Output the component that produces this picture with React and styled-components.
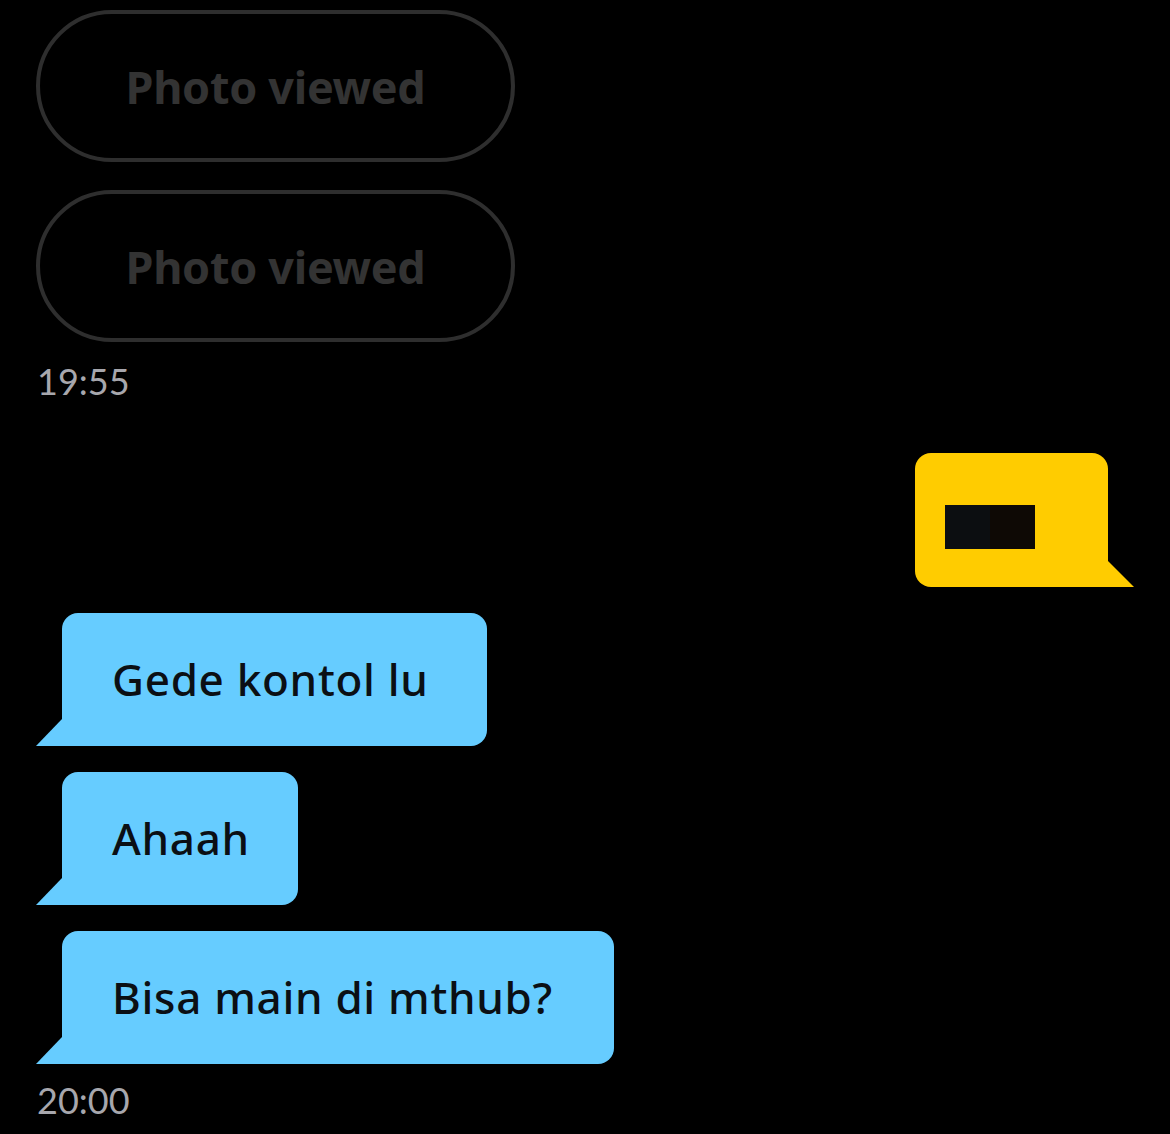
import React from "react";
import styled, { createGlobalStyle } from "styled-components";

const GlobalStyle = createGlobalStyle`
  html, body {
    margin: 0;
    padding: 0;
    background: #000;
  }
  body {
    font-family: "Noto Sans", "Liberation Sans", sans-serif;
  }
`;

const Chat = styled.div`
  width: 1170px;
  height: 1134px;
  box-sizing: border-box;
  padding: 10px 36px 0 36px;
  display: flex;
  flex-direction: column;
  overflow: hidden;
  background: #000;
`;

const Pill = styled.div`
  width: 479px;
  height: 152px;
  box-sizing: border-box;
  border: 4px solid #2e2e2e;
  border-radius: 76px;
  display: flex;
  align-items: center;
  justify-content: center;
  margin-bottom: ${(p) => p.gap || 0}px;
  color: #333333;
  font-family: "Noto Sans", sans-serif;
  font-weight: 700;
  font-size: 45px;
  letter-spacing: -0.3px;
`;

const Time = styled.div`
  font-family: Lato, "Noto Sans", sans-serif;
  font-size: 36px;
  color: #a7a7ad;
  line-height: 44px;
  margin-top: ${(p) => p.top}px;
  padding-left: 1px;
`;

const OutRow = styled.div`
  display: flex;
  justify-content: flex-end;
  margin-top: ${(p) => p.top}px;
  padding-right: 26px;
`;

const YellowBubble = styled.div`
  position: relative;
  width: 193px;
  height: 134px;
  box-sizing: border-box;
  padding: 52px 0 0 30px;
  background: #ffcc00;
  border-radius: 16px 16px 0 16px;

  &::after {
    content: "";
    position: absolute;
    right: -26px;
    bottom: 0;
    width: 0;
    height: 0;
    border-bottom: 26px solid #ffcc00;
    border-right: 26px solid transparent;
  }
`;

const Redacted = styled.div`
  width: 90px;
  height: 44px;
  display: flex;
`;

const RedactedPart = styled.div`
  flex: 1;
  background: ${(p) => p.color};
`;

const InList = styled.div`
  display: flex;
  flex-direction: column;
  align-items: flex-start;
  gap: 26px;
  margin-top: ${(p) => p.top}px;
  padding-left: 26px;
`;

const BlueBubble = styled.div`
  position: relative;
  height: 133px;
  box-sizing: border-box;
  padding: 0 0 2px 50px;
  display: flex;
  align-items: center;
  background: #66ccff;
  border-radius: 16px 16px 16px 0;
  color: #0b0f14;
  font-family: "Noto Sans", sans-serif;
  font-weight: 500;
  font-size: 44px;
  letter-spacing: 0.7px;
  white-space: nowrap;

  &::before {
    content: "";
    position: absolute;
    left: -26px;
    bottom: 0;
    width: 0;
    height: 0;
    border-bottom: 27px solid #66ccff;
    border-left: 26px solid transparent;
  }
`;

const messages = [
  { text: "Gede kontol lu", w: 425 },
  { text: "Ahaah", w: 236 },
  { text: "Bisa main di mthub?", w: 552 },
];

export default function App() {
  return (
    <>
      <GlobalStyle />
      <Chat>
        <Pill gap={28}>Photo viewed</Pill>
        <Pill>Photo viewed</Pill>
        <Time top={17}>19:55</Time>
        <OutRow top={50}>
          <YellowBubble>
            <Redacted>
              <RedactedPart color="#0c0e11" />
              <RedactedPart color="#0e0905" />
            </Redacted>
          </YellowBubble>
        </OutRow>
        <InList top={26}>
          {messages.map((m) => (
            <BlueBubble key={m.text} style={{ width: m.w }}>
              {m.text}
            </BlueBubble>
          ))}
        </InList>
        <Time top={14}>20:00</Time>
      </Chat>
    </>
  );
}
